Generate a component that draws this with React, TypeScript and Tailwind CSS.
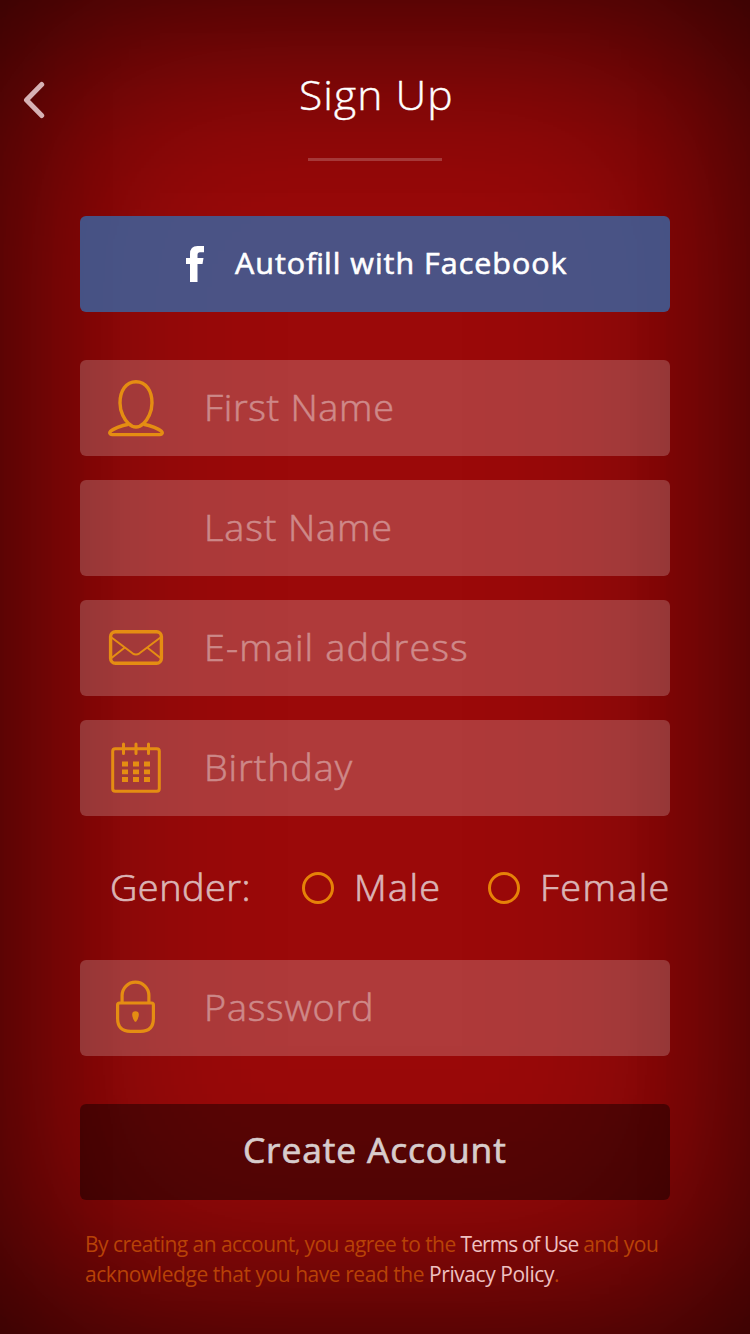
import type { ReactNode } from 'react';

const sans = "font-['Open_Sans','Noto_Sans',sans-serif]";

function PersonIcon() {
  return (
    <svg width="56" height="57" viewBox="0 0 56 57" fill="none" stroke="#e58d12" strokeWidth="3.4" strokeLinejoin="round">
      <path d="M28 1.7C18 1.7 12 11 12 23C12 32 16.5 40 20.5 43.5C23.5 46.500 25.500 47 28 47C30.500 47 32.500 46.500 35.500 43.500C39.500 40 44 32 44 23C44 11 38 1.700 28 1.700Z" />
      <path d="M20.500 44.200C13 45.500 5 49 2.500 51.300C1 53 2 54.600 4 54.600H52C54 54.600 55 53 53.500 51.300C51 49 43 45.500 35.500 44.200" />
    </svg>
  );
}

function MailIcon() {
  return (
    <svg width="56" height="36" viewBox="0 0 56 36" fill="none" stroke="#e58d12">
      <rect x="2.600" y="1.700" width="50.800" height="31.600" rx="4.800" strokeWidth="3.400" />
      <path d="M3.500 7.500L24.500 23.300Q28 25.500 31.500 23.300L52.500 7.500M3.500 28L16.500 17.800M52.500 28L39.500 17.800" strokeWidth="2" />
    </svg>
  );
}

function CalendarIcon() {
  return (
    <svg width="56" height="52" viewBox="0 0 56 52" fill="none" stroke="#e58d12">
      <rect x="4.700" y="6.700" width="46.600" height="42.600" rx="2.500" strokeWidth="3" />
      <path d="M15.500 2V11.500M28 2V11.500M40.500 2V11.500" strokeWidth="3" strokeLinecap="round" />
      <path d="M14 22H20M25 22H31M36 22H42M14 29.800H20M25 29.800H31M36 29.800H42M14 37.500H20M25 37.500H31M36 37.500H42" strokeWidth="4.800" />
    </svg>
  );
}

function LockIcon() {
  return (
    <svg className="-translate-x-[0.500px] -translate-y-px" width="40" height="54" viewBox="0 0 40 54" fill="none" stroke="#e58d12" strokeWidth="3.200">
      <path d="M6.600 22.500V15.500A13.400 13.400 0 0 1 33.400 15.500V22.500" />
      <path d="M4 23H36Q37.900 23 37.900 25V38.500Q37.900 51.400 25 51.400H15Q2.100 51.400 2.100 38.500V25Q2.100 23 4 23Z" />
      <path d="M16.700 34.500A3.300 3.300 0 0 1 23.300 34.500Q23.300 38 20.800 41.500Q20 42 19.200 41.500Q16.700 38 16.700 34.500Z" fill="#e58d12" stroke="none" />
    </svg>
  );
}

function Field({ label, spacing, icon }: { label: string; spacing: string; icon?: ReactNode }) {
  return (
    <div className="flex h-24 items-center rounded-md bg-white/20">
      <div className="flex w-28 justify-center">{icon}</div>
      <span className={`ml-[12px] origin-left scale-x-[1.050] text-[36px] leading-none font-light whitespace-nowrap text-white opacity-40 [-webkit-text-stroke:0.5px_white] ${spacing}`}>{label}</span>
    </div>
  );
}

export default function App() {
  return (
    <main className={`flex h-[1334px] w-[750px] flex-col overflow-hidden bg-[#9b0909] shadow-[inset_0_0_240px_rgba(0,0,0,0.73),inset_0_80px_200px_-80px_rgba(0,0,0,0.18),inset_0_-80px_200px_-80px_rgba(0,0,0,0.18)] ${sans}`}>
      <header className="grid h-[216px] grid-cols-[80px_1fr_80px]">
        <button aria-label="Back" className="mt-[81px] ml-[23px] h-10 w-6">
          <svg width="24" height="40" viewBox="0 0 24 40" fill="none" stroke="#d6b2b5" strokeWidth="5" strokeLinecap="round" strokeLinejoin="round">
            <path d="M18.700 3.500L3.500 19L18.700 34.500" />
          </svg>
        </button>
        <div className="flex flex-col items-center pt-[69px]">
          <h1 className="translate-x-px scale-x-[1.040] text-[41px] leading-[50px] font-light tracking-[1px] text-white [-webkit-text-stroke:0.4px_white]">Sign Up</h1>
          <div className="mt-[39px] h-[3px] w-[134px] bg-white/20" />
        </div>
      </header>
      <section className="mx-20 flex flex-col">
        <button className="flex h-24 items-center rounded-md bg-[#3d609b]/85 pl-[106px] text-white">
          <svg width="18" height="36" viewBox="0 0 18 36" fill="currentColor">
            <path d="M4 36V18H0V12H4V8Q4 0 11.500 0H18V6.300H14Q11.500 6.300 11.500 9V12H17.500L16.500 18H11.500V36Z" />
          </svg>
          <span className="ml-[31px] origin-left scale-x-[1.050] pb-[3px] text-[29px] leading-none font-normal tracking-[0.950px] whitespace-nowrap [-webkit-text-stroke:0.6px_white]">
            Auto<span className="tracking-normal">fi</span>ll with Facebook
          </span>
        </button>
        <div className="mt-12 flex flex-col gap-6">
          <Field label="First Name" spacing="tracking-[0.650px]" icon={<PersonIcon />} />
          <Field label="Last Name" spacing="tracking-[0.850px]" />
          <Field label="E-mail address" spacing="tracking-[1.070px]" icon={<MailIcon />} />
          <Field label="Birthday" spacing="tracking-[0.850px]" icon={<CalendarIcon />} />
        </div>
        <div className="flex h-36 items-center text-[36px] leading-none font-light whitespace-nowrap text-[#dbb4b5] [-webkit-text-stroke:0.7px_#dbb4b5]">
          <span className="w-[222px] shrink-0 pl-[30px]">
            <span className="inline-block origin-left scale-x-[1.050] tracking-[0.500px]">Gender:</span>
          </span>
          <span className="flex w-[186px] shrink-0 items-center">
            <span className="size-8 rounded-full border-3 border-[#e68208]" />
            <span className="ml-[20px] origin-left scale-x-[1.050] tracking-[1.300px]">Male</span>
          </span>
          <span className="flex shrink-0 items-center">
            <span className="size-8 rounded-full border-3 border-[#e68208]" />
            <span className="ml-[20px] origin-left scale-x-[1.050] tracking-[1.300px]">Female</span>
          </span>
        </div>
        <Field label="Password" spacing="tracking-[0.750px]" icon={<LockIcon />} />
        <button className="mt-12 flex h-24 items-center justify-center rounded-md bg-black/42">
          <span className="scale-x-[1.040] pb-[4px] text-[34px] leading-none font-normal tracking-[0.850px] text-[#d8cccc] [-webkit-text-stroke:0.7px_#d8cccc]">Create Account</span>
        </button>
        <p className="mt-[29px] ml-[5px] text-[21px] leading-[30px] tracking-[-0.550px] whitespace-nowrap text-[#b84207]">
          By creating an account, you agree to the <a className="tracking-[-0.950px] text-[#efc0c0]">Terms of Use</a> and you
          <br />
          <span className="tracking-[-0.450px]">
            acknowledge that you have read the <a className="text-[#efc0c0]">Privacy Policy</a>.
          </span>
        </p>
      </section>
    </main>
  );
}
